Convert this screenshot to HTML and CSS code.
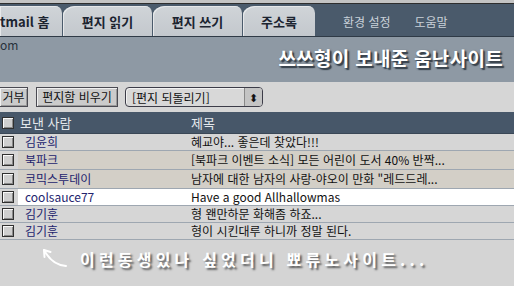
FILE: index.html
```html
<!DOCTYPE html>
<html lang="ko">
<head>
    <meta charset="UTF-8">
    <title>Hotmail 받은 편지함</title>
    <link rel="stylesheet" href="styles.css">
</head>
<body>
    <div class="topline"></div>
    <div class="tabbar">
        <div class="tab first">tmail 홈</div>
        <div class="tab">편지 읽기</div>
        <div class="tab">편지 쓰기</div>
        <div class="tab short">주소록</div>
        <a class="toplink">환경 설정</a>
        <a class="toplink">도움말</a>
    </div>

    <div class="banner">
        <span class="account">om</span>
        <h1 class="title">쓰쓰형이 보내준 움난사이트</h1>
    </div>

    <div class="toolbar">
        <button class="btn cut">거부</button>
        <button class="btn wide">편지함 비우기</button>
        <div class="select">
            <span>[편지 되돌리기]</span>
            <span class="spin">&#x2B0D;</span>
        </div>
    </div>

    <div class="list">
        <div class="row head">
            <div class="cell check"><span class="box"></span></div>
            <div class="cell from">보낸 사람</div>
            <div class="cell subject">제목</div>
        </div>
        <div class="row">
            <div class="cell check"><span class="box"></span></div>
            <div class="cell from">김윤희</div>
            <div class="cell subject">혜교야... 좋은데 찾았다!!!</div>
        </div>
        <div class="row beige tall">
            <div class="cell check"><span class="box"></span></div>
            <div class="cell from">북파크</div>
            <div class="cell subject">[북파크 이벤트 소식] 모든 어린이 도서 40% 반짝...</div>
        </div>
        <div class="row beige tall">
            <div class="cell check"><span class="box"></span></div>
            <div class="cell from">코믹스투데이</div>
            <div class="cell subject">남자에 대한 남자의 사랑-야오이 만화 "레드드레...</div>
        </div>
        <div class="row unread">
            <div class="cell check"><span class="box"></span></div>
            <div class="cell from">coolsauce77</div>
            <div class="cell subject">Have a good Allhallowmas</div>
        </div>
        <div class="row">
            <div class="cell check"><span class="box"></span></div>
            <div class="cell from">김기훈</div>
            <div class="cell subject">형 왠만하문 화해좀 하죠...</div>
        </div>
        <div class="row">
            <div class="cell check"><span class="box"></span></div>
            <div class="cell from">김기훈</div>
            <div class="cell subject">형이 시킨대루 하니까 정말 된다.</div>
        </div>
    </div>

    <div class="note">
        <svg class="arrow" width="30" height="24" viewBox="0 0 30 24">
            <path d="M26 20 Q12 19 4 4" fill="none" stroke="#fff" stroke-width="2" stroke-linecap="round"/>
            <path d="M4 4 L4.5 11 M4 4 L10.5 6" fill="none" stroke="#fff" stroke-width="2" stroke-linecap="round"/>
        </svg>
        <span class="caption">이런동생있나 싶었더니 뾰류노사이트...</span>
    </div>
</body>
</html>
```

FILE: styles.css
```css
/* Base */
* {
    box-sizing: border-box;
}
body {
    margin: 0;
    width: 514px;
    height: 286px;
    overflow: hidden;
    background: #d4d4d4;
    font-family: "Noto Sans CJK KR", "Liberation Sans", sans-serif;
    font-size: 12px;
    color: #111;
}

.topline {
    height: 4px;
    background: #c4c4c4;
    border-bottom: 1px solid #2e2e2e;
}

/* Tabs */
.tabbar {
    display: flex;
    align-items: flex-end;
    height: 33px;
    background: #4a5a6b;
    border-bottom: 1px solid #2f3a46;
    overflow: hidden;
}
.tab {
    width: 89px;
    height: 30px;
    margin-right: 1px;
    display: flex;
    align-items: center;
    justify-content: center;
    background: linear-gradient(#d0d4d8, #c3c8cd);
    border-radius: 12px 7px 0 0 / 9px 7px 0 0;
    box-shadow: inset 1px 1px 0 #e6e8ea;
    font-size: 13px;
    font-weight: bold;
    color: #1c2430;
    white-space: nowrap;
}
.tab.first {
    width: 62px;
    justify-content: flex-start;
    border-top-left-radius: 0;
}
.tab.short {
    width: 72px;
}
.toplink {
    align-self: center;
    margin-left: 27px;
    margin-top: 2px;
    color: #c9d1d9;
    font-size: 12px;
}
.toplink + .toplink {
    margin-left: 24px;
}

/* Banner */
.banner {
    height: 45px;
    background: #8e99a4;
    display: flex;
    justify-content: space-between;
    align-items: flex-start;
}
.account {
    margin-top: 1px;
    line-height: 14px;
    color: #28313c;
    font-size: 12px;
}
.title {
    margin: 8px 11px 0 0;
    font-size: 19px;
    line-height: 26px;
    font-weight: bold;
    letter-spacing: 0.3px;
    color: #fff;
    text-shadow: 2px 2px 1px #38424c, 1px 1px 2px #38424c;
}

/* Toolbar */
.toolbar {
    height: 30px;
    display: flex;
    align-items: center;
    background: #d6d6d6;
}
.btn {
    height: 20px;
    margin-right: 8px;
    padding: 0 2px;
    font-family: inherit;
    font-size: 12px;
    line-height: 16px;
    color: #111;
    white-space: nowrap;
    background: #cbcbcb;
    border: 1px solid #4a4a52;
    box-shadow: inset 1px 1px 0 #f0f0f0, inset -1px -1px 0 #9a9a9a;
}
.btn.cut {
    width: 28px;
    border-left: 0;
    padding-left: 2px;
}
.btn.wide {
    width: 82px;
    margin-right: 7px;
}
.select {
    width: 138px;
    height: 20px;
    display: flex;
    align-items: center;
    justify-content: space-between;
    padding-left: 6px;
    border: 1px solid #3c3c48;
    border-radius: 4px;
    background: #d8d8d8;
    box-shadow: inset 1px 1px 0 #f2f2f2;
    overflow: hidden;
}
.spin {
    width: 18px;
    height: 18px;
    display: flex;
    align-items: center;
    justify-content: center;
    background: #c4c4c4;
    border-left: 1px solid #888;
    font-size: 11px;
    color: #111;
}

/* Message list */
.row {
    display: flex;
    height: 17px;
    line-height: 16px;
    background: #d6d6d6;
    border-bottom: 1px solid #9ea7b1;
}
.row.tall {
    height: 19px;
    line-height: 18px;
}
.row.beige .cell {
    background: #d3cfc7;
}
.row.unread .from,
.row.unread .subject {
    background: #fff;
}
.row.head {
    height: 22px;
    line-height: 21px;
    background: #475769;
    border-bottom: 1px solid #3a4756;
    color: #e4e8ec;
    font-size: 13px;
}
.row.head .from {
    color: #e4e8ec;
    padding-left: 2px;
}
.cell {
    white-space: nowrap;
    overflow: hidden;
}
.check {
    width: 18px;
    display: flex;
    align-items: center;
    justify-content: center;
}
.row.beige .check,
.row.unread .check {
    background: #d6d6d6;
}
.box {
    width: 12px;
    height: 12px;
    margin-left: -3px;
    background: #cfcfcf;
    border: 1px solid #303030;
    box-shadow: inset 1px 1px 0 #fafafa, inset -1px -1px 0 #8a8a8a;
}
.from {
    width: 172px;
    padding-left: 7px;
    color: #23246e;
}
.subject {
    flex: 1;
    padding-left: 1px;
}

/* Caption under list */
.note {
    display: flex;
    align-items: flex-start;
    padding: 6px 0 0 40px;
}
.arrow {
    display: block;
}
.caption {
    margin: 3px 0 0 10px;
    font-size: 16px;
    line-height: 20px;
    font-weight: bold;
    letter-spacing: 4.2px;
    color: #fff;
    text-shadow: 2px 2px 2px #5a5a5a;
}
```
